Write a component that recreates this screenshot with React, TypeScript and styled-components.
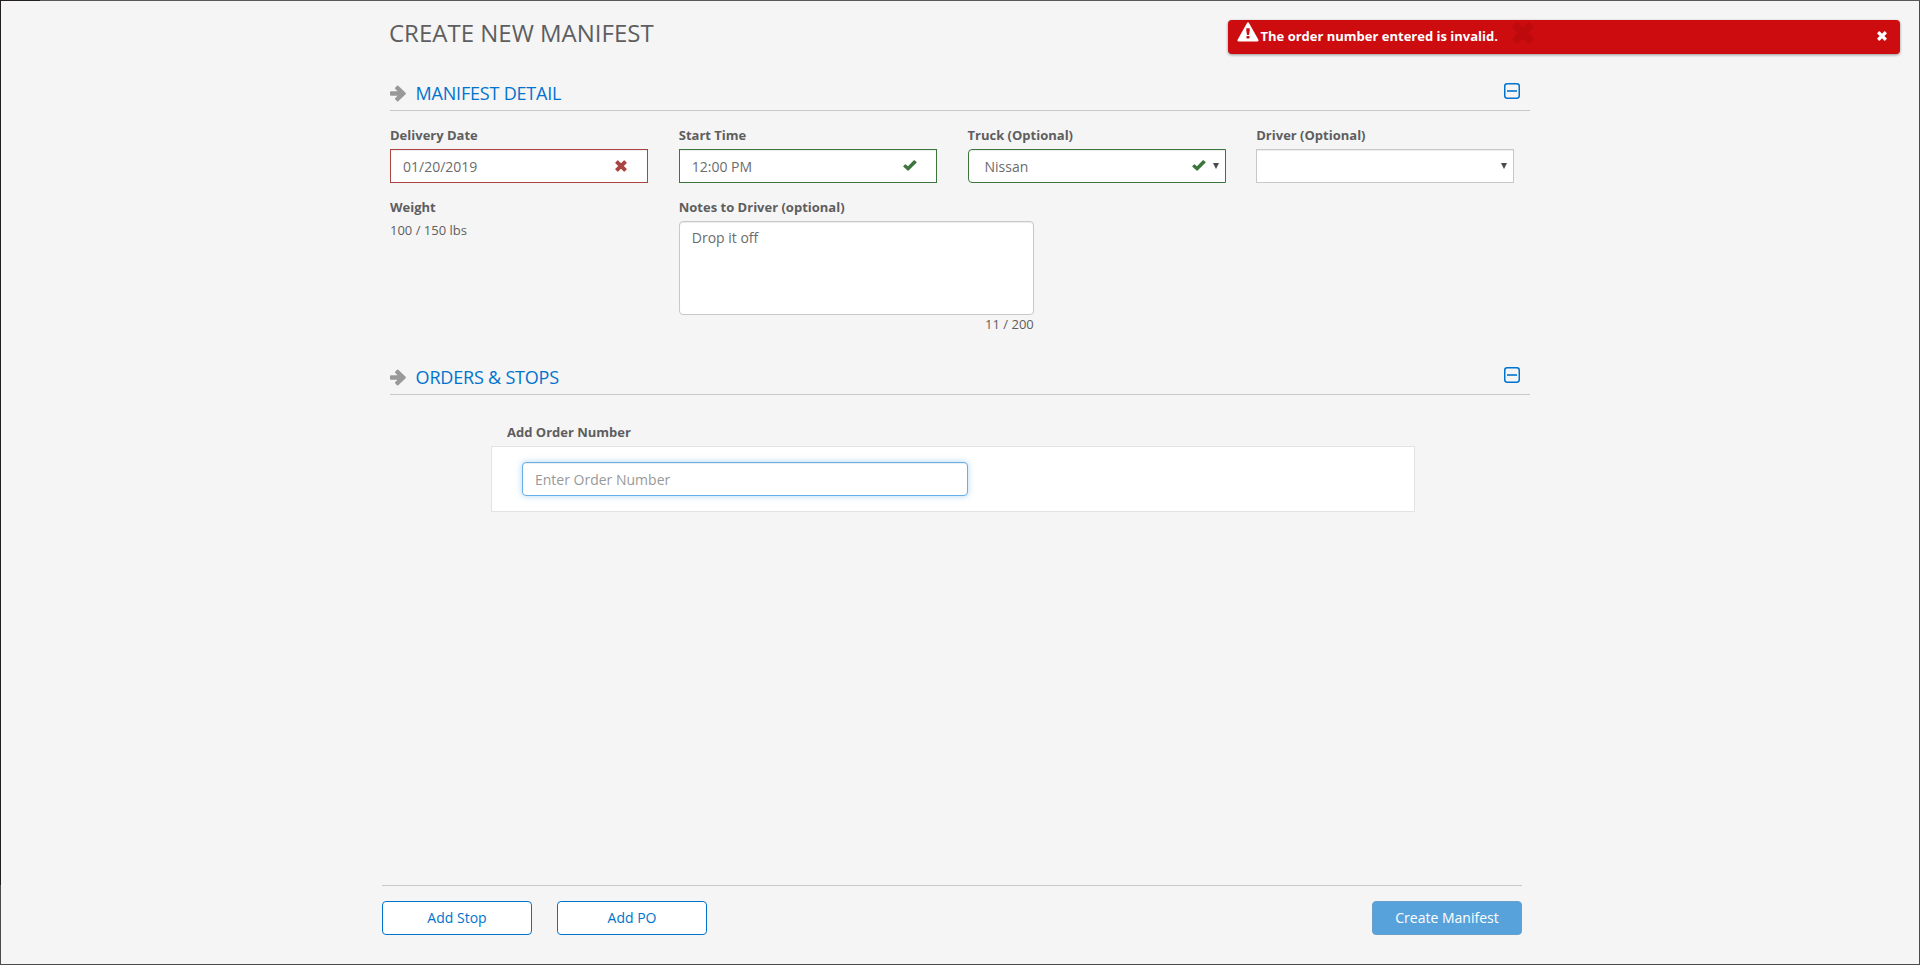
import React from "react";
import styled, { createGlobalStyle } from "styled-components";

const GlobalStyle = createGlobalStyle`
  *, *::before, *::after { box-sizing: border-box; }
  body {
    margin: 0;
    background: #f5f5f5;
    color: #5e5e60;
    font-family: "Open Sans", "Liberation Sans", sans-serif;
    font-size: 13px;
    line-height: 18px;
  }
  input, select, textarea, button { font-family: inherit; margin: 0; }
`;

type Status = "error" | "success" | "none";
const statusColor: Record<Status, string> = {
  error: "#a94442",
  success: "#3c763d",
  none: "#c8c8c8",
};

const Window = styled.div`
  position: relative;
  display: flex;
  flex-direction: column;
  width: 1920px;
  height: 965px;
  border: 1px solid #4b4a4c;
  border-top-color: #5a585a;
`;

const TopEdge = styled.div`
  position: absolute;
  top: -1px;
  left: -1px;
  width: 40px;
  height: 1px;
  background: #231f20;
`;

const LeftEdge = styled(TopEdge)`
  width: 1px;
  height: 885px;
`;

const Content = styled.main`
  width: 1140px;
  margin-left: 389px;
  padding-top: 15px;
`;

const PageTitle = styled.h1`
  margin: 0 0 30px -1px;
  font-size: 24px;
  font-weight: 400;
  line-height: 34px;
`;

const SectionHeader = styled.header`
  display: flex;
  align-items: flex-start;
  height: 31px;
  border-bottom: 1px solid #c8c8c8;

  > svg { margin-top: 5px; color: #999; }
`;

const SectionTitle = styled.h2`
  flex: 1;
  margin: 0 0 0 8.6px;
  font-size: 18px;
  font-weight: 400;
  line-height: 26px;
  letter-spacing: -0.2px;
  color: #0073ce;
`;

const ToggleButton = styled.button`
  display: block;
  width: 16px;
  height: 16px;
  margin: 3px 10px 0 0;
  padding: 0;
  border: 0;
  background: none;
  color: #0073ce;

  svg { display: block; }
`;

const FieldGrid = styled.div`
  display: grid;
  grid-template-columns: repeat(4, 258px);
  column-gap: 30.75px;
  row-gap: 15px;
  margin: 15px 0 31px;
`;

const Field = styled.div<{ $span?: number }>`
  grid-column: span ${(p) => p.$span ?? 1};
  display: flex;
  flex-direction: column;
  align-items: stretch;
`;

const Label = styled.label`
  margin-bottom: 5px;
  font-weight: 700;
`;

const Control = styled.div<{ $status: Status; $radius?: string; $inset?: number }>`
  display: flex;
  align-items: center;
  height: 34px;
  padding-left: ${(p) => p.$inset ?? 12}px;
  background: #fff;
  border: 1px solid ${(p) => statusColor[p.$status]};
  border-radius: ${(p) => p.$radius ?? "0"};
  box-shadow: inset 0 1px 1px rgba(0, 0, 0, 0.075);
  color: ${(p) => statusColor[p.$status]};
`;

const ControlInput = styled.input`
  flex: 1;
  min-width: 0;
  height: 32px;
  padding: 1px 0 0;
  border: 0;
  outline: 0;
  background: none;
  font-size: 14px;
  color: #6c6c6c;
`;

const ControlSelect = styled.select`
  flex: 1;
  min-width: 0;
  height: 32px;
  padding: 1px 0 0;
  border: 0;
  outline: 0;
  appearance: none;
  background: none;
  font-size: 14px;
  color: #6c6c6c;
`;

const StatusIcon = styled.span<{ $right: number }>`
  display: flex;
  margin: 0 ${(p) => p.$right}px 1px 0;
`;

const Caret = styled.span`
  width: 0;
  height: 0;
  margin: 0 6px 1px 0;
  border: 3px solid transparent;
  border-top: 6px solid #4a4a4a;
  border-bottom: 0;
`;

const Notes = styled.textarea`
  display: block;
  width: 355px;
  height: 94px;
  padding: 6px 12px;
  border: 1px solid #c8c8c8;
  border-radius: 4px;
  box-shadow: inset 0 1px 1px rgba(0, 0, 0, 0.075);
  outline: 0;
  resize: none;
  font-size: 14px;
  line-height: 20px;
  color: #6c6c6c;
`;

const Counter = styled.div`
  width: 355px;
  text-align: right;
`;

const OrderEntry = styled.div`
  display: flex;
  flex-direction: column;
  width: 924px;
  margin: 28px 0 0 101px;

  ${Label} { margin-left: 16px; }
`;

const OrderPanel = styled.div`
  height: 66px;
  padding: 15px 30px;
  background: #fff;
  border: 1px solid #e3e3e3;
`;

const OrderInput = styled.input`
  display: block;
  width: 446px;
  height: 34px;
  padding: 1px 12px 0;
  border: 1px solid #66afe9;
  border-radius: 4px;
  outline: 0;
  box-shadow: inset 0 1px 1px rgba(0, 0, 0, 0.075), 0 0 6px rgba(102, 175, 233, 0.5);
  font-size: 14px;

  &::placeholder { color: #999; opacity: 1; }
`;

const Footer = styled.footer`
  display: flex;
  gap: 25px;
  width: 1140px;
  margin: auto 0 0 381px;
  padding: 15px 0 29px;
  border-top: 1px solid #c8c8c8;
`;

const ActionButton = styled.button<{ $primary?: boolean }>`
  width: 150px;
  height: 34px;
  padding: 0 0 2px;
  margin-left: ${(p) => (p.$primary ? "auto" : "0")};
  border: 1px solid ${(p) => (p.$primary ? "#6a9fcb" : "#0073ce")};
  border-radius: 4px;
  background: ${(p) => (p.$primary ? "#58a2dc" : "#fff")};
  font-size: 14px;
  color: ${(p) => (p.$primary ? "#fff" : "#0073ce")};
`;

const Alert = styled.div`
  position: absolute;
  top: 19px;
  left: 1227px;
  display: flex;
  align-items: flex-start;
  width: 672px;
  height: 34px;
  padding: 2px 13px 0 9px;
  border-radius: 4px;
  background: #cc0c0f;
  box-shadow: 0 1px 3px rgba(0, 0, 0, 0.4);
  color: #fff;
`;

const AlertText = styled.span`
  margin: 5px 14px 0 1.5px;
  font-weight: 700;
`;

const AlertMark = styled.span`
  display: flex;
  color: #bd0a0d;
`;

const AlertClose = styled.button`
  display: flex;
  margin: 9px 0 0 auto;
  padding: 0;
  border: 0;
  background: none;
  color: #fff;
`;

const ArrowIcon = () => (
  <svg width="17" height="17" viewBox="0 0 17 17">
    <path
      fill="currentColor"
      d="M1 6.3H7.6L5.3 3.9Q4.7 3.2 5.3 2.6L7 .8Q7.6 .3 8.3 .8L15.6 7.8Q16.3 8.5 15.6 9.2L8.3 16.2Q7.6 16.7 7 16.2L5.3 14.4Q4.7 13.8 5.3 13.1L7.6 10.7H1Q0 10.7 0 9.7V7.3Q0 6.3 1 6.3Z"
    />
  </svg>
);

const MinusSquareIcon = () => (
  <svg width="16" height="16" viewBox="0 0 16 16" fill="none" stroke="currentColor">
    <rect x="0.75" y="0.75" width="14.5" height="14.5" rx="2.4" strokeWidth="1.5" />
    <path d="M3 8H13" strokeWidth="1.6" />
  </svg>
);

const CrossIcon = ({ size }: { size: number }) => (
  <svg width={size} height={size} viewBox="0 0 12 12">
    <path
      fill="currentColor"
      d="M3.2.4 6 3.2 8.8.4Q9.2 0 9.6.4L11.6 2.4Q12 2.8 11.6 3.2L8.8 6 11.6 8.8Q12 9.2 11.6 9.6L9.6 11.6Q9.2 12 8.8 11.6L6 8.8 3.2 11.6Q2.8 12 2.4 11.6L.4 9.6Q0 9.2.4 8.8L3.2 6 .4 3.2Q0 2.8.4 2.4L2.4.4Q2.8 0 3.2.4Z"
    />
  </svg>
);

const CheckIcon = () => (
  <svg width="14" height="11" viewBox="0 0 14 11">
    <path
      fill="currentColor"
      d="M10.8.3Q11.2 0 11.6.3L13.5 1.9Q13.9 2.3 13.5 2.7L5.6 10.5Q5.1 11 4.6 10.5L.4 6.7Q0 6.3.4 5.9L1.9 4.4Q2.3 4 2.7 4.4L5 6.2Z"
    />
  </svg>
);

const WarningIcon = () => (
  <svg width="22" height="20" viewBox="0 0 22 20">
    <path
      fill="currentColor"
      fillRule="evenodd"
      d="M10 1Q11 -.3 12 1L21.4 17.8Q22 19.5 20.3 19.5H1.7Q0 19.5.6 17.8ZM9.3 6.3H12.7V8.5L12 13H10L9.3 8.5ZM9.5 14H12.5V16.5H9.5Z"
    />
  </svg>
);

function Section({ title }: { title: string }) {
  return (
    <SectionHeader>
      <ArrowIcon />
      <SectionTitle>{title}</SectionTitle>
      <ToggleButton aria-label="Collapse section">
        <MinusSquareIcon />
      </ToggleButton>
    </SectionHeader>
  );
}

export default function App() {
  return (
    <>
      <GlobalStyle />
      <Window>
        <TopEdge />
        <LeftEdge />
        <Content>
          <PageTitle>CREATE NEW MANIFEST</PageTitle>
          <Section title="MANIFEST DETAIL" />
          <FieldGrid>
            <Field>
              <Label>Delivery Date</Label>
              <Control $status="error">
                <ControlInput defaultValue="01/20/2019" />
                <StatusIcon $right={20}><CrossIcon size={12} /></StatusIcon>
              </Control>
            </Field>
            <Field>
              <Label>Start Time</Label>
              <Control $status="success">
                <ControlInput defaultValue="12:00 PM" />
                <StatusIcon $right={19}><CheckIcon /></StatusIcon>
              </Control>
            </Field>
            <Field>
              <Label>Truck (Optional)</Label>
              <Control $status="success" $radius="4px 0 0 4px" $inset={16}>
                <ControlSelect defaultValue="Nissan">
                  <option>Nissan</option>
                </ControlSelect>
                <StatusIcon $right={7}><CheckIcon /></StatusIcon>
                <Caret />
              </Control>
            </Field>
            <Field>
              <Label>Driver (Optional)</Label>
              <Control $status="none">
                <ControlSelect />
                <Caret />
              </Control>
            </Field>
            <Field>
              <Label>Weight</Label>
              <span>100 / 150 lbs</span>
            </Field>
            <Field $span={2}>
              <Label>Notes to Driver (optional)</Label>
              <Notes defaultValue="Drop it off" />
              <Counter>11 / 200</Counter>
            </Field>
          </FieldGrid>
          <Section title="ORDERS & STOPS" />
          <OrderEntry>
            <Label>Add Order Number</Label>
            <OrderPanel>
              <OrderInput placeholder="Enter Order Number" />
            </OrderPanel>
          </OrderEntry>
        </Content>
        <Footer>
          <ActionButton>Add Stop</ActionButton>
          <ActionButton>Add PO</ActionButton>
          <ActionButton $primary>Create Manifest</ActionButton>
        </Footer>
        <Alert role="alert">
          <WarningIcon />
          <AlertText>The order number entered is invalid.</AlertText>
          <AlertMark><CrossIcon size={22} /></AlertMark>
          <AlertClose aria-label="Close"><CrossIcon size={10} /></AlertClose>
        </Alert>
      </Window>
    </>
  );
}
